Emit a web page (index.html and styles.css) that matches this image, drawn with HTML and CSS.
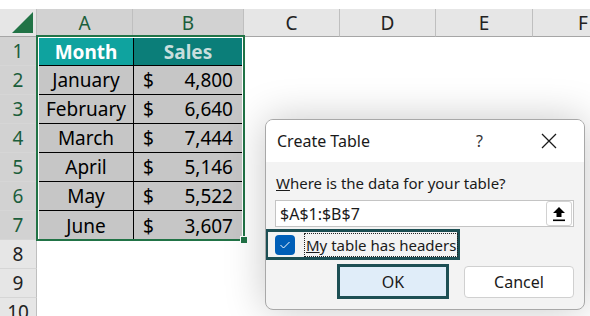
FILE: index.html
```html
<!DOCTYPE html>
<html lang="en">
<head>
    <meta charset="UTF-8">
    <title>Create Table</title>
    <link rel="stylesheet" href="styles.css">
</head>
<body>
    <!-- Worksheet -->
    <div class="sheet">
        <div class="corner">
            <svg width="22" height="22" viewBox="0 0 22 22"><polygon points="21,0 21,21 0,21" fill="#217346"/></svg>
        </div>
        <div class="col-head selected">A</div>
        <div class="col-head selected">B</div>
        <div class="col-head">C</div>
        <div class="col-head">D</div>
        <div class="col-head">E</div>
        <div class="col-head last">F</div>

        <div class="row-head selected" style="grid-row: 2">1</div>
        <div class="row-head selected" style="grid-row: 3">2</div>
        <div class="row-head selected" style="grid-row: 4">3</div>
        <div class="row-head selected" style="grid-row: 5">4</div>
        <div class="row-head selected" style="grid-row: 6">5</div>
        <div class="row-head selected" style="grid-row: 7">6</div>
        <div class="row-head selected" style="grid-row: 8">7</div>
        <div class="row-head" style="grid-row: 9">8</div>
        <div class="row-head" style="grid-row: 10">9</div>
        <div class="row-head" style="grid-row: 11">10</div>

        <!-- Data range A1:B7 -->
        <div class="data">
            <div class="cell head month">Month</div>
            <div class="cell head sales">Sales</div>

            <div class="cell">January</div>
            <div class="cell money"><span>$</span><span>4,800</span></div>
            <div class="cell">February</div>
            <div class="cell money"><span>$</span><span>6,640</span></div>
            <div class="cell">March</div>
            <div class="cell money"><span>$</span><span>7,444</span></div>
            <div class="cell">April</div>
            <div class="cell money"><span>$</span><span>5,146</span></div>
            <div class="cell">May</div>
            <div class="cell money"><span>$</span><span>5,522</span></div>
            <div class="cell last">June</div>
            <div class="cell money last"><span>$</span><span>3,607</span></div>
            <div class="fill-handle"></div>
        </div>
    </div>

    <!-- Create Table dialog -->
    <div class="dialog">
        <div class="dialog-title">
            <span class="title-text">Create Table</span>
            <span class="help">?</span>
            <svg class="close" width="16" height="16" viewBox="0 0 16 16">
                <path d="M1 1 L15 15 M15 1 L1 15" stroke="#1a1a1a" stroke-width="1.3" fill="none"/>
            </svg>
        </div>
        <div class="dialog-body">
            <p class="prompt"><u>W</u>here is the data for your table?</p>
            <div class="range-box">
                <span class="range-text">$A$1:$B$7</span>
                <span class="collapse-btn">
                    <svg width="14" height="16" viewBox="0 0 14 16">
                        <polygon points="7,1 13,7 9.5,7 9.5,11 4.5,11 4.5,7 1,7" fill="#000"/>
                        <rect x="1" y="13.5" width="12" height="1.6" fill="#000"/>
                    </svg>
                </span>
            </div>
            <div class="check-row">
                <span class="checkbox">
                    <svg width="12" height="10" viewBox="0 0 12 10"><path d="M1.5 5 L4.5 8 L10.5 2" stroke="#fff" stroke-width="1" fill="none"/></svg>
                </span>
                <span class="check-label"><u>M</u>y table has headers</span>
            </div>
            <div class="buttons">
                <button class="btn ok">OK</button>
                <button class="btn cancel">Cancel</button>
            </div>
        </div>
    </div>
</body>
</html>
```

FILE: styles.css
```css
/* Worksheet */
body {
    margin: 0;
    padding-top: 9px;
    background-color: #fff;
    font-family: "Noto Sans", "Open Sans", sans-serif;
    overflow: hidden;
}

.sheet {
    display: grid;
    grid-template-columns: 37px 96px 111px 96px 96px 97px minmax(0, 1fr);
    grid-template-rows: 28px repeat(10, 29px);
    position: relative;
}

.corner {
    background-color: #e6e6e6;
    border-right: 1px solid #bfbfbf;
    border-bottom: 1px solid #a6a6a6;
    display: flex;
    align-items: flex-end;
    justify-content: flex-end;
    padding: 0 2px 2px 0;
    box-sizing: border-box;
}

.col-head {
    background-color: #e6e6e6;
    border-right: 1px solid #bfbfbf;
    border-bottom: 1px solid #a6a6a6;
    color: #222;
    font-size: 19px;
    display: flex;
    align-items: center;
    justify-content: center;
    box-sizing: border-box;
}

.col-head.last {
    justify-content: flex-start;
    padding-left: 45px;
    border-right: none;
}

.col-head.selected {
    background-color: #d2d2d2;
    color: #1b5e3b;
}

.row-head {
    grid-column: 1;
    background-color: #e6e6e6;
    border-right: 1px solid #bfbfbf;
    border-bottom: 1px solid #d6d6d6;
    color: #222;
    font-size: 19px;
    display: flex;
    align-items: center;
    justify-content: center;
    box-sizing: border-box;
}

.row-head.selected {
    background-color: #d2d2d2;
    color: #1b5e3b;
}

/* Data range */
.data {
    grid-column: 2 / 4;
    grid-row: 2 / 9;
    display: grid;
    grid-template-columns: 95px 108px;
    grid-template-rows: 28px repeat(6, 29px);
    position: relative;
    outline: 2px solid #217346;
    outline-offset: -1px;
    padding: 2px;
    margin-top: -1px;
    height: 204px;
    box-sizing: border-box;
}

.cell {
    background-color: #c6c6c6;
    border-right: 1px solid #000;
    border-bottom: 1px solid #000;
    color: #000;
    font-size: 19px;
    display: flex;
    align-items: center;
    justify-content: center;
    box-sizing: border-box;
}

.cell.money {
    border-right: none;
    justify-content: space-between;
    padding: 0 9px;
}

.cell.last {
    border-bottom: none;
}

.cell.head {
    font-weight: bold;
}

.month {
    background-color: #0fa39f;
    color: #fff;
}

.sales {
    background-color: #0b7e79;
    color: #c9dedd;
    border-right: none;
}

.fill-handle {
    position: absolute;
    right: -4px;
    bottom: -4px;
    width: 6px;
    height: 6px;
    background-color: #217346;
    border: 1px solid #fff;
}

/* Dialog */
.dialog {
    position: absolute;
    left: 265px;
    top: 119px;
    width: 320px;
    height: 191px;
    box-sizing: border-box;
    border: 1px solid #a8a8a8;
    border-radius: 8px;
    background-color: #f3f3f3;
    box-shadow: 0 0 40px rgba(0, 0, 0, 0.22);
    overflow: hidden;
    color: #1a1a1a;
}

.dialog-title {
    height: 42px;
    background-color: #fff;
    display: flex;
    align-items: center;
    padding-left: 11px;
}

.title-text {
    font-size: 16px;
    flex: 1;
}

.help {
    font-size: 16px;
    color: #333;
    margin-right: 58px;
}

.close {
    margin-right: 27px;
}

.dialog-body {
    padding: 11px 10px 0 9px;
}

.prompt {
    margin: 0 0 7px 1px;
    font-size: 15px;
    line-height: 20px;
}

.range-box {
    height: 27px;
    background-color: #fff;
    border: 1px solid #c4c4c4;
    box-sizing: border-box;
    display: flex;
    align-items: center;
    justify-content: space-between;
    padding: 0 1px 0 4px;
}

.range-text {
    font-size: 16px;
}

.collapse-btn {
    width: 26px;
    height: 25px;
    box-sizing: border-box;
    border: 1px solid #d2d2d2;
    border-radius: 3px;
    display: flex;
    align-items: center;
    justify-content: center;
}

.check-row {
    display: flex;
    align-items: center;
    width: 195px;
    height: 31px;
    margin: 2px 0 0 -10px;
    border: 3px solid #1d4f54;
    box-sizing: border-box;
    padding-left: 7px;
    white-space: nowrap;
}

.checkbox {
    flex: none;
    width: 20px;
    height: 20px;
    border-radius: 4px;
    background-color: #005fb8;
    display: flex;
    align-items: center;
    justify-content: center;
    margin-right: 9px;
}

.check-label {
    font-size: 15px;
    border: 1px dotted #222;
    line-height: 22px;
    padding: 0 1px;
}

.buttons {
    display: flex;
    justify-content: flex-end;
    align-items: center;
    gap: 15px;
    margin-top: 4px;
}

.btn {
    font-family: "Noto Sans", "Open Sans", sans-serif;
    font-size: 16px;
    color: #1a1a1a;
    cursor: pointer;
}

.ok {
    width: 112px;
    height: 35px;
    background-color: #e0edf9;
    border: 3px solid #1d4f54;
}

.cancel {
    width: 110px;
    height: 32px;
    background-color: #fff;
    border: 1px solid #d0d0d0;
    border-radius: 4px;
}
```
